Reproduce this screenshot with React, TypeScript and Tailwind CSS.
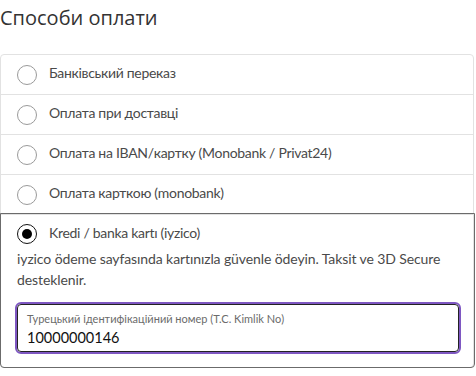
import { useState } from "react";

const methods = [
  "Банківський переказ",
  "Оплата при доставці",
  "Оплата на IBAN/картку (Monobank / Privat24)",
  "Оплата карткою (monobank)",
];

const Radio = ({ checked }: { checked?: boolean }) => (
  <span
    className={`flex h-[20px] w-[20px] shrink-0 items-center justify-center rounded-full border ${
      checked ? "border-[#111]" : "border-[#9a9a9a]"
    } bg-white`}
  >
    {checked && <span className="h-[10px] w-[10px] rounded-full bg-black" />}
  </span>
);

export default function App() {
  const [tc, setTc] = useState("10000000146");

  return (
    <div className="h-[376px] w-[476px] bg-white font-['Lato',sans-serif] text-[#4a4a4a]">
      <h2 className="pt-[5px] font-['Open_Sans',sans-serif] text-[20px] leading-[26px] text-[#333]">
        Способи оплати
      </h2>

      <div className="mt-[23px] mr-[2px] rounded-[4px] border border-[#e2e2e2]">
        {methods.map((m) => (
          <div
            key={m}
            className="flex h-[40px] items-center gap-[12px] border-b border-[#e2e2e2] pl-[16px] text-[14px] tracking-[-0.3px]"
          >
            <Radio />
            <span className="mb-[4px]">{m}</span>
          </div>
        ))}

        {/* selected method */}
        <div className="-mx-px mt-[-2px] mr-[-2px] -mb-px rounded-b-[4px] border border-[#6b6b6b] pl-[14px] pr-[13px] pb-[13px]">
          <div className="flex h-[40px] items-center gap-[12px] pl-[2px] text-[14px] tracking-[-0.3px]">
            <Radio checked />
            <span className="mb-[4px]">Kredi / banka kartı (iyzico)</span>
          </div>
          <p className="-mt-[6px] pl-[2px] text-[14px] leading-[21px] tracking-[-0.1px]">
            iyzico ödeme sayfasında kartınızla güvenle ödeyin. Taksit ve 3D Secure
            desteklenir.
          </p>
          <label className="mt-[12px] block rounded-[6px] border-2 border-[#7e57c2]">
            <div className="rounded-[4px] border border-[#222] px-[9px] pt-[7px] pb-[4px]">
              <div className="text-[11px] leading-[14px] text-[#6b6b6b]">
                Турецький ідентифікаційний номер (T.C. Kimlik No)
              </div>
              <input
                value={tc}
                onChange={(e) => setTc(e.target.value)}
                className="mt-[3px] block w-full bg-transparent text-[14.5px] leading-[18px] text-[#111] outline-none"
              />
            </div>
          </label>
        </div>
      </div>
    </div>
  );
}
